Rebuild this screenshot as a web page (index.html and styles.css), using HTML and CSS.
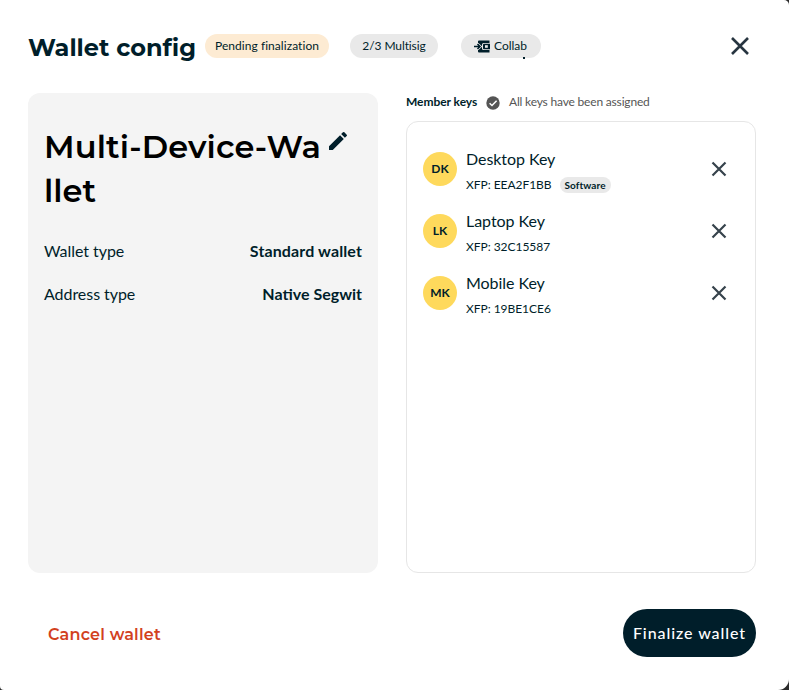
FILE: index.html
```
<!DOCTYPE html>
<html lang="en">
<head>
<meta charset="utf-8">
<title>Wallet config</title>
<link rel="stylesheet" href="styles.css">
</head>
<body>
<main class="dialog">
  <header class="header">
    <h1 class="title">Wallet config</h1>
    <span class="pill pill-pending">Pending finalization</span>
    <span class="pill pill-multisig">2/3 Multisig</span>
    <span class="pill pill-collab">
      <svg class="collab-icon" width="17" height="13" viewBox="0 0 17 13"><path d="M4 1.500Q4 .5 5 .5H15.500V3H9.500Q8 3 8 4.500V8.500Q8 10 9.500 10H15.500V12.500H5Q4 12.500 4 11.500V10L8 6.500L4 3Z" fill="#001e2a"/><path d="M10 3.800H16V9.200H10Q9 9.200 9 8.200V4.800Q9 3.800 10 3.800Z" fill="#001e2a"/><rect x="11" y="5.200" width="2.800" height="2.600" fill="#e9e9e9"/><path d="M0 6.500H6M3.500 4L6 6.500L3.500 9" fill="none" stroke="#e9e9e9" stroke-width="3"/><path d="M0 6.500H6M3.500 4L6 6.500L3.500 9" fill="none" stroke="#001e2a" stroke-width="1.600"/></svg>
      Collab<i class="speck"></i>
    </span>
    <button class="close" aria-label="Close"><svg width="20" height="20" viewBox="0 0 20 20"><path d="M2 2L18 18M18 2L2 18"/></svg></button>
  </header>
  <div class="columns">
    <section class="summary">
      <div class="name-row">
        <h2 class="name"><span class="name-first">Multi-Device-Wa</span><br>llet</h2>
        <svg class="pencil" width="24" height="24" viewBox="0 0 24 24"><path d="M3 17.250V21h3.750L17.810 9.940l-3.750-3.750L3 17.250zM20.710 7.040a1 1 0 0 0 0-1.410l-2.340-2.340a1 1 0 0 0-1.410 0l-1.830 1.830 3.750 3.750 1.830-1.830z"/></svg>
      </div>
      <dl class="facts">
        <div class="fact"><dt>Wallet type</dt><dd class="type">Standard wallet</dd></div>
        <div class="fact"><dt>Address type</dt><dd>Native Segwit</dd></div>
      </dl>
    </section>
    <section class="members">
      <div class="members-head">
        <h3>Member keys</h3>
        <svg class="check" width="14" height="14" viewBox="0 0 14 14"><circle cx="7" cy="7" r="6.700" fill="#555"/><path d="M3.600 7.200L6 9.500L10.600 4.700" fill="none" stroke="#fff" stroke-width="1.500"/></svg>
        <span class="status">All keys have been assigned</span>
      </div>
      <ul class="keys">
        <li class="key"><span class="avatar">DK</span><div class="info"><div class="key-name">Desktop Key</div><div class="xfp">XFP: EEA2F1BB<span class="tag">Software</span></div></div><button class="remove" aria-label="Remove"><svg width="16" height="16" viewBox="0 0 16 16"><path d="M1.500 1.500L14.500 14.500M14.500 1.500L1.500 14.500"/></svg></button></li>
        <li class="key"><span class="avatar">LK</span><div class="info"><div class="key-name">Laptop Key</div><div class="xfp">XFP: 32C15587</div></div><button class="remove" aria-label="Remove"><svg width="16" height="16" viewBox="0 0 16 16"><path d="M1.500 1.500L14.500 14.500M14.500 1.500L1.500 14.500"/></svg></button></li>
        <li class="key"><span class="avatar">MK</span><div class="info"><div class="key-name">Mobile Key</div><div class="xfp">XFP: 19BE1CE6</div></div><button class="remove" aria-label="Remove"><svg width="16" height="16" viewBox="0 0 16 16"><path d="M1.500 1.500L14.500 14.500M14.500 1.500L1.500 14.500"/></svg></button></li>
      </ul>
    </section>
  </div>
  <footer class="footer">
    <button class="cancel">Cancel wallet</button>
    <button class="finalize">Finalize wallet</button>
  </footer>
</main>
</body>
</html>
```
FILE: styles.css
```
* { box-sizing: border-box; }
body { margin: 0; background: #2b2b2b; font-family: Lato, sans-serif; color: #001e2a; }
h1, h2, h3, dl, dd, ul { margin: 0; padding: 0; }
button { border: 0; background: none; padding: 0; font: inherit; color: inherit; }
svg { display: block; flex: none; }
.dialog { width: 789px; height: 690px; background: #fff; border-radius: 0 5px 11px 4px; padding: 0 33px 0 28px; overflow: hidden; }
.header { height: 93px; display: flex; align-items: center; }
.title { width: 177px; font: 700 24px/30px Montserrat, Inter, sans-serif; white-space: nowrap; padding-top: 2px; }
.pill { height: 24px; border-radius: 12px; background: #e9e9e9; font-size: 12px; line-height: 24px; text-align: center; white-space: nowrap; margin-top: -1px; }
.pill-pending { width: 124px; background: #fdebd3; letter-spacing: .05px; }
.pill-multisig { width: 88px; margin-left: 21px; letter-spacing: -.1px; }
.pill-collab { position: relative; width: 80px; margin-left: 23px; display: flex; align-items: center; gap: 3px; padding-left: 13px; }
.speck { position: absolute; left: 62px; top: 23px; width: 2px; height: 2px; background: #001e2a; }
.close { margin: -1px 6px 0 auto; }
.close path { fill: none; stroke: #273540; stroke-width: 2.6; }
.columns { display: flex; gap: 28px; height: 480px; }
.summary { width: 350px; background: #f4f4f4; border-radius: 12px; padding: 32px 16px; }
.name-row { display: flex; height: 88px; }
.name { width: 282px; font: 600 32px/44px Montserrat, Inter, sans-serif; color: #000; white-space: nowrap; }
.name-first { letter-spacing: .15px; }
.pencil { margin-top: 4px; fill: #001e2a; }
.facts { padding-top: 27px; font-size: 16px; line-height: 22px; }
.fact { display: flex; justify-content: space-between; margin-bottom: 21px; }
.fact dt { letter-spacing: -.05px; }
.fact dd { font-weight: 700; }
.fact .type { letter-spacing: .12px; }
.members { width: 350px; display: flex; flex-direction: column; }
.members-head { height: 28px; display: flex; align-items: center; font-size: 12px; line-height: 16px; padding-bottom: 8px; }
.members-head h3 { font-size: 12px; width: 80px; white-space: nowrap; letter-spacing: -.05px; padding-bottom: 2px; }
.status { margin-left: 9px; color: #555; letter-spacing: -.18px; padding-bottom: 2px; }
.keys { list-style: none; flex: 1; border: 1px solid #e6e6e6; border-radius: 12px; padding: 25px 28px 0 16px; }
.key { display: flex; height: 62px; }
.avatar { width: 34px; height: 34px; margin-top: 5px; border-radius: 50%; background: #fed95c; font-size: 12px; font-weight: 700; line-height: 34px; text-align: center; }
.info { margin-left: 9px; margin-top: -1px; }
.key-name { font-size: 16px; line-height: 26px; letter-spacing: -.05px; }
.xfp { display: flex; align-items: center; height: 24px; font-size: 12px; letter-spacing: -.04px; }
.tag { margin: 1px 0 0 8px; height: 16px; width: 51px; text-align: center; border-radius: 8px; background: #e9e9e9; font-size: 10px; line-height: 16px; font-weight: 700; letter-spacing: .1px; }
.remove { height: 16px; margin: 14px 0 0 auto; }
.remove path { fill: none; stroke: #36434c; stroke-width: 2.2; }
.footer { display: flex; justify-content: space-between; align-items: center; padding: 36px 0 0 20px; }
.cancel { color: #d2411e; font: 600 16px/24px Montserrat, Inter, sans-serif; letter-spacing: .2px; padding-top: 3px; }
.finalize { width: 133px; height: 48px; border-radius: 24px; background: #001e2a; color: #fff; font-size: 16px; font-weight: 500; letter-spacing: .93px; white-space: nowrap; padding-bottom: 1px; }
```
